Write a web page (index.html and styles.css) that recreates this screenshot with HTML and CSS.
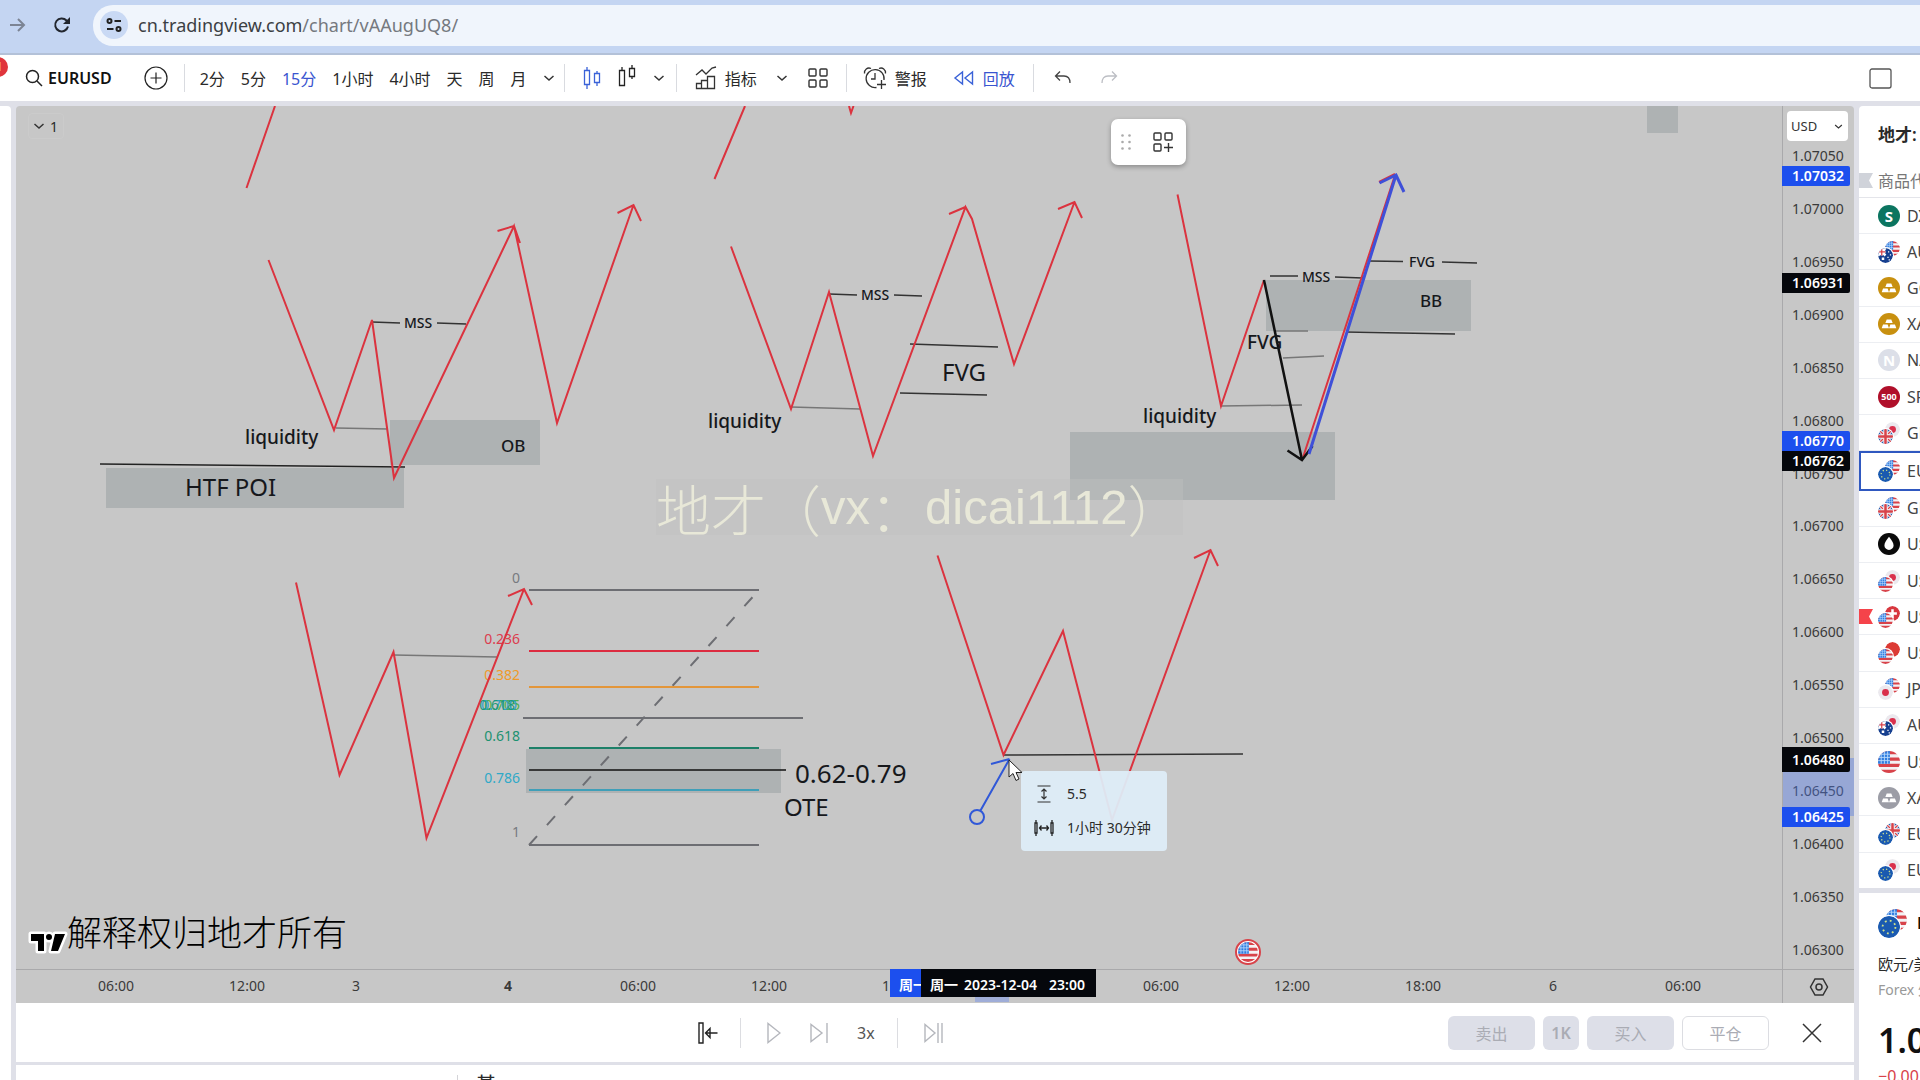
FILE: index.html
```html
<!DOCTYPE html>
<html lang="zh-CN">
<head>
<meta charset="utf-8">
<title>EURUSD</title>
<link rel="stylesheet" href="styles.css">
</head>
<body>
<svg class="defs" aria-hidden="true">
  <defs>
    <clipPath id="disc"><circle cx="12" cy="12" r="12"/></clipPath>
    <symbol id="us" viewBox="0 0 24 24"><g clip-path="url(#disc)"><path fill="#f4f2f4" d="M0 0h24v24H0z"/><path fill="#d8434a" d="M0 0h24v3.5H0zM0 7h24v3.5H0zM0 14h24v3.5H0zM0 20.500h24V24H0z"/><path fill="#2f7de0" d="M0 0h13v14H0z"/><path stroke="#b9d9fb" stroke-width="1" d="M3.500 0v14M7 0v14M10.500 0v14M0 3.500h13M0 7h13M0 10.500h13"/></g></symbol>
    <symbol id="eu" viewBox="0 0 24 24"><circle cx="12" cy="12" r="12" fill="#1a5ab0"/><circle cx="12" cy="12" r="7" fill="none" stroke="#cfe08a" stroke-width="2" stroke-dasharray="2 3.500"/></symbol>
    <symbol id="gb" viewBox="0 0 24 24"><g clip-path="url(#disc)"><path fill="#2d5fae" d="M0 0h24v24H0z"/><path stroke="#f6f2f4" stroke-width="5" d="M0 0l24 24M24 0L0 24M12 0v24M0 12h24"/><path stroke="#d8434a" stroke-width="2" d="M0 0l24 24M24 0L0 24"/><path stroke="#f6f2f4" stroke-width="7" d="M12 0v24M0 12h24"/><path stroke="#d8434a" stroke-width="4" d="M12 0v24M0 12h24"/></g></symbol>
    <symbol id="jp" viewBox="0 0 24 24"><circle cx="12" cy="12" r="12" fill="#ebe9ee"/><circle cx="12" cy="12" r="5.500" fill="#d9304c"/></symbol>
    <symbol id="ch" viewBox="0 0 24 24"><circle cx="12" cy="12" r="12" fill="#d8383f"/><path fill="#fff" d="M10 5h4v5h5v4h-5v5h-4v-5H5v-4h5z"/></symbol>
    <symbol id="cn" viewBox="0 0 24 24"><circle cx="12" cy="12" r="12" fill="#dc3a34"/></symbol>
    <symbol id="au" viewBox="0 0 24 24"><g clip-path="url(#disc)"><path fill="#163f8f" d="M0 0h24v24H0z"/><path stroke="#fff" stroke-width="4" d="M0 0l12 12M12 0L0 12M6 0v12M0 6h12"/><path stroke="#d8434a" stroke-width="2" d="M6 0v12M0 6h12"/><path fill="#fff" d="M16 5h2v2h-2zM19 10h2v2h-2zM15 14h2v2h-2zM17 18h2v2h-2zM6 15h4v4H6z"/></g></symbol>
    <symbol id="bars" viewBox="0 0 24 24"><path fill="#fff" d="M9.500 7h5l1.500 4H8zM5.500 12.500h5L12 16.500H4zM13.500 12.500h5l1.500 4h-8z"/></symbol>
    <symbol id="chev" viewBox="0 0 12 12"><path fill="none" stroke="#333" stroke-width="1.500" d="M1.500 4L6 8l4.500-4"/></symbol>
  </defs>
</svg>

<header class="browser">
  <button class="plain" aria-label="前进"><svg width="18" height="18" viewBox="0 0 18 18" fill="none" stroke="#7c8494" stroke-width="2"><path d="M1 9h14M9 3l6 6-6 6"/></svg></button>
  <button class="plain" aria-label="刷新"><svg width="18" height="18" viewBox="0 0 18 18" fill="none" stroke="#22262e" stroke-width="2"><path d="M15 10.500A6.500 6.500 0 1 1 13.500 4.500L15.500 6.500"/><path fill="#22262e" stroke="none" d="M17 1v7h-7z"/></svg></button>
  <div class="address">
    <span class="site"><svg width="16" height="16" viewBox="0 0 16 16" fill="none" stroke="#222" stroke-width="2"><circle cx="3.500" cy="4" r="2"/><path d="M8.500 4H15M1 12h6.500"/><circle cx="12.500" cy="12" r="2"/></svg></span>
    <a class="url" href="#">cn.tradingview.com<span>/chart/vAAugUQ8/</span></a>
  </div>
</header>

<nav class="toolbar">
  <span class="badge">1</span>
  <div class="group first">
    <button class="plain symbol"><svg width="18" height="18" viewBox="0 0 18 18" fill="none" stroke="#222" stroke-width="1.500"><circle cx="7.500" cy="7.500" r="6"/><path d="M12 12l5 5"/></svg><b>EURUSD</b></button>
    <button class="plain" aria-label="添加"><svg width="24" height="24" viewBox="0 0 24 24" fill="none" stroke="#222" stroke-width="1.200"><circle cx="12" cy="12" r="11"/><path d="M12 6.500v11M6.500 12h11"/></svg></button>
  </div>
  <div class="group intervals">
    <button class="plain">2分</button><button class="plain">5分</button><button class="plain active">15分</button><button class="plain">1小时</button><button class="plain">4小时</button><button class="plain">天</button><button class="plain">周</button><button class="plain">月</button>
    <button class="plain" aria-label="更多"><svg width="12" height="12"><use href="#chev"/></svg></button>
  </div>
  <div class="group types">
    <button class="plain" aria-label="K线"><svg width="18" height="26" viewBox="0 0 18 26" fill="none" stroke="#3a62d8" stroke-width="1.300"><path d="M1.500 5.500h5v14h-5zM4 2v3.500M4 19.500V24M11.500 8.500h5v9h-5zM14 6v2.500M14 17.500V21"/></svg></button>
    <button class="plain" aria-label="空心"><svg width="20" height="26" viewBox="0 0 20 26" fill="none" stroke="#222" stroke-width="1.300"><path d="M2.500 5.500h5v15h-5zM5 2v3.500M12.500 3.500h5v8h-5zM15 0v3.500M15 11.500V14"/></svg></button>
    <button class="plain" aria-label="更多"><svg width="12" height="12"><use href="#chev"/></svg></button>
  </div>
  <div class="group tools">
    <button class="plain labelled"><svg width="22" height="24" viewBox="0 0 22 24" fill="none" stroke="#333" stroke-width="1.300"><path d="M1 9l6-5 4 4 6-6 4-1M1.500 17.500h5v5h-5zM6.500 14.500h6v8h-6zM12.500 10.500h7v12h-7z"/></svg>指标</button>
    <button class="plain" aria-label="收藏"><svg width="12" height="12"><use href="#chev"/></svg></button>
    <button class="plain" aria-label="模板"><svg width="22" height="22" viewBox="0 0 22 22" fill="none" stroke="#333" stroke-width="1.400"><rect x="2" y="2" width="7" height="7" rx="1"/><rect x="13" y="2" width="7" height="7" rx="1"/><rect x="2" y="13" width="7" height="7" rx="1"/><rect x="13" y="13" width="7" height="7" rx="1"/></svg></button>
  </div>
  <div class="group alerts">
    <button class="plain labelled"><svg width="24" height="24" viewBox="0 0 24 24" fill="none" stroke="#333" stroke-width="1.300"><path d="M13.500 21.500A9 9 0 1 1 21 14M12 7v6H8M18.500 14v9M14 18.500h9M1.500 7.500C1 3.500 4.500 1 8 2.500M22.500 7.500C23 3.500 19.500 1 16 2.500"/></svg>警报</button>
    <button class="plain labelled active"><svg width="22" height="16" viewBox="0 0 22 16" fill="none" stroke="#3a62d8" stroke-width="1.400"><path d="M9.500 2v12L2 8zM19.500 2v12L12 8z"/></svg>回放</button>
  </div>
  <div class="group history">
    <button class="plain" aria-label="撤销"><svg width="17" height="16" viewBox="0 0 17 16" fill="none" stroke="#444" stroke-width="1.300"><path d="M6 1.500L1.500 6 6 10.500M1.500 6H10c4 0 6 3 6 7"/></svg></button>
    <button class="plain" aria-label="重做"><svg width="17" height="16" viewBox="0 0 17 16" fill="none" stroke="#bcbec4" stroke-width="1.300"><path d="M11 1.500L15.500 6 11 10.500M15.500 6H7c-4 0-6 3-6 7"/></svg></button>
  </div>
  <button class="plain layout" aria-label="布局"><svg width="23" height="21" viewBox="0 0 23 21" fill="none" stroke="#555" stroke-width="1.300"><rect x="1" y="1" width="21" height="19" rx="2"/></svg></button>
</nav>

<main class="main">
  <aside class="drawbar"></aside>
  <div class="center">
    <section class="chart">
      <div class="plot">
        <svg class="canvas" viewBox="16 106 1766 863" fill="none">
          <g fill="#aeb2b3">
            <rect x="390" y="420" width="150" height="45"/><rect x="106" y="468" width="298" height="40"/>
            <rect x="1647" y="106" width="31" height="27"/><rect x="1266" y="280" width="205" height="51"/>
            <rect x="1070" y="432" width="265" height="68"/><rect x="526" y="749" width="255" height="44"/>
          </g>
          <g stroke="#333" stroke-width="1.500">
            <path stroke="#222" d="M100 464l305 3"/>
            <path d="M372 322l28 1M437 323l29 1M829 294l28 1M894 295l28 1M910 344l88 3M900 393l87 2M1369 261l34 .500M1442 262l35 1M1270 276h28M1335 277l28 1M1346 332l109 2M1004 755l239-1"/>
          </g>
          <g stroke="#777" stroke-width="1.500"><path d="M336 428l52 1M791 407l69 2M1276 331h32M1283 358l41-2M1221 406l81-1M394 655l103 2"/></g>
          <g stroke="#6d6e73" stroke-width="2"><path d="M529 590h230M523 718h280M529 845h230"/><path stroke-dasharray="12 14.800" d="M529 845L759 590"/></g>
          <g stroke-width="2"><path stroke="#dc2c40" d="M529 651h230"/><path stroke="#e3963a" d="M529 687h230"/><path stroke="#1c8068" d="M529 748h230"/><path stroke="#3f9fb8" d="M529 790h230"/></g>
          <path stroke="#111" stroke-width="1.300" d="M529 770h257"/>
          <g class="fib"><text x="520" y="583" fill="#777a80">0</text><text x="520" y="644" fill="#dc3c4e">0.236</text><text x="520" y="680" fill="#f09a2a">0.382</text><text x="520" y="710" fill="#52b04c">0.705</text><text x="517" y="710" fill="#2f9fc4">0.700</text><text x="515" y="710" fill="#1c9a78">0.618</text><text x="520" y="741" fill="#1c9270">0.618</text><text x="520" y="783" fill="#2fa9c8">0.786</text><text x="520" y="837" fill="#777a80">1</text></g>
          <g stroke="#db333f" stroke-width="2">
            <path d="M246.500 188L275 106M714.500 179L745 106M849 106l2 7 2.500-7"/>
            <path d="M268.500 260L334 430 372 320 394 478 514 226 557 423 633.500 205M497.500 231l16.500-5 6 17M617.500 213l16-8 7.500 16"/>
            <path d="M731 246.500L791 409 829 292 873 456 965.500 207l6.500 12 42 145L1074.500 202M949 214l16.500-7M1058 209l16.500-7 7.500 16"/>
            <path d="M1177.500 194.500L1221 406l43-126M1302.500 459L1395 175M1379 182l16-8"/>
            <path d="M296 582.500L339.500 775 393.500 652 426.500 838 524 589M508 596l16-7 8 16"/>
            <path d="M937.500 555.500L1003.500 755 1063 631l49 189 98.500-270M1194 558l16.500-8 7.500 16"/>
          </g>
          <path stroke="#111" stroke-width="2.500" d="M1264 280l38 180M1287.500 450.500L1302 460l10.500-14"/>
          <path stroke="#3f50d8" stroke-width="3" d="M1309 454l87-279M1379.500 183l16.500-8 8 17"/>
          <g stroke="#3058d8" stroke-width="2"><path d="M980.500 810.500L1009.500 759M991 764l18.500-5"/><circle cx="977" cy="817" r="7"/></g>
          <g class="note"><text x="404" y="328">MSS</text><text x="861" y="300">MSS</text><text x="1302" y="282">MSS</text><text x="1409" y="267">FVG</text></g>
          <g class="word"><text x="245" y="444">liquidity</text><text x="708" y="428">liquidity</text><text x="1143" y="423">liquidity</text><text x="1247" y="349">FVG</text></g>
          <g class="tag"><text x="501" y="452">OB</text><text x="1420" y="307">BB</text></g>
          <g class="title"><text x="185" y="496">HTF POI</text><text x="942" y="381">FVG</text><text class="ratio" x="795" y="783">0.62-0.79</text><text x="784" y="816">OTE</text></g>
          <circle cx="1248" cy="952" r="12" fill="#fff" stroke="#d8434a" stroke-width="2"/><use href="#us" x="1238" y="942" width="20" height="20"/>
          <path fill="#000" stroke="#fff" stroke-width="5" stroke-linejoin="round" paint-order="stroke" d="M31 934h13v17h-6v-10h-7zM46 937a3 3 0 1 0 6 0a3 3 0 1 0-6 0M55 934h10l-7 17h-7z"/>
        </svg>
        <button class="legend plain"><svg width="12" height="12"><use href="#chev"/></svg>1</button>
        <div class="floating">
          <svg width="10" height="16" viewBox="0 0 10 16" fill="#aaa"><circle cx="1.500" cy="1.500" r="1.300"/><circle cx="8.500" cy="1.500" r="1.300"/><circle cx="1.500" cy="8" r="1.300"/><circle cx="8.500" cy="8" r="1.300"/><circle cx="1.500" cy="14.500" r="1.300"/><circle cx="8.500" cy="14.500" r="1.300"/></svg>
          <button class="plain" aria-label="添加模板"><svg width="20" height="20" viewBox="0 0 20 20" fill="none" stroke="#333" stroke-width="1.400"><rect x="1" y="1" width="7" height="7" rx="1"/><rect x="12" y="1" width="7" height="7" rx="1"/><rect x="1" y="12" width="7" height="7" rx="1"/><path d="M11 15.500h9M15.500 11v9"/></svg></button>
        </div>
        <p class="watermark">地才（<span>vx</span>：<span>dicai1112</span>）</p>
        <p class="rights">解释权归地才所有</p>
        <div class="measure">
          <svg width="20" height="18" viewBox="0 0 20 18" fill="none" stroke="#333" stroke-width="1.200"><path d="M3.500 1h13M3.500 17h13M10 4v10M7.500 6.500L10 4l2.500 2.500M7.500 11.500L10 14l2.500-2.500"/></svg><span>5.5</span>
          <svg width="20" height="16" viewBox="0 0 20 16" fill="none" stroke="#222" stroke-width="1.300"><path d="M1 3h2v10H1zM17 3h2v10h-2zM2 0v3M2 13v3M18 0v3M18 13v3M5.500 8h9M7.500 5.500L5.500 8l2 2.500M12.500 5.500l2 2.500-2 2.500"/></svg><span>1小时 30分钟</span>
        </div>
        <svg class="cursor" width="16" height="24" viewBox="0 0 16 24"><path fill="#fff" stroke="#222" d="M1 1v17l4-3.500 3 7 3-1.500-3-6.500h6z"/></svg>
      </div>
      <div class="prices">
        <label class="currency"><select aria-label="货币"><option>USD</option></select><svg width="9" height="9"><use href="#chev"/></svg></label>
        <ul class="ticks"><li>1.07050</li><li>1.07000</li><li>1.06950</li><li>1.06900</li><li>1.06850</li><li>1.06800</li><li>1.06750</li><li>1.06700</li><li>1.06650</li><li>1.06600</li><li>1.06550</li><li>1.06500</li><li>1.06450</li><li>1.06400</li><li>1.06350</li><li>1.06300</li></ul>
        <span class="range"></span>
        <b class="price blue" style="top:60px">1.07032</b><b class="price" style="top:167px">1.06931</b><b class="price blue" style="top:325px">1.06770</b><b class="price" style="top:345px">1.06762</b><b class="price tall" style="top:641px">1.06480</b><b class="price blue" style="top:701px">1.06425</b>
      </div>
      <div class="times">
        <span>06:00</span><span>12:00</span><span>3</span><span><b>4</b></span><span>06:00</span><span>12:00</span><span>18:00</span><span>06:00</span><span>12:00</span><span>18:00</span><span>6</span><span>06:00</span>
        <i class="span"></i>
        <div class="stamps"><b class="start">周一</b><b class="end"><span>周一</span><span>2023-12-04</span><span>23:00</span></b></div>
      </div>
      <button class="plain gear" aria-label="设置"><svg width="20" height="18" viewBox="0 0 20 18" fill="none" stroke="#333" stroke-width="1.500"><path d="M6 1h8l4.500 8-4.500 8H6L1.500 9z"/><circle cx="10" cy="9" r="3"/></svg></button>
    </section>
    <section class="replay">
      <div class="controls">
        <button class="plain" aria-label="跳至"><svg width="20" height="22" viewBox="0 0 20 22" fill="none" stroke="#222" stroke-width="1.400"><path d="M1 1h4v20H1zM19.500 11H8M12 6.500L7.500 11l4.500 4.500z"/></svg></button>
        <i class="bar"></i>
        <button class="plain" aria-label="播放"><svg width="14" height="22" viewBox="0 0 14 22" fill="none" stroke="#b5b7bd" stroke-width="1.400"><path d="M1 1.500v19L13 11z"/></svg></button>
        <button class="plain" aria-label="下一步"><svg width="18" height="22" viewBox="0 0 18 22" fill="none" stroke="#b5b7bd" stroke-width="1.400"><path d="M1 2.500v17L12 11zM17 1v20"/></svg></button>
        <button class="plain speed">3x</button>
        <i class="bar"></i>
        <button class="plain" aria-label="实时"><svg width="19" height="22" viewBox="0 0 19 22" fill="none" stroke="#b5b7bd" stroke-width="1.400"><path d="M1 2.500v17L11 11zM14 1v20M18 1v20"/></svg></button>
      </div>
      <div class="orders">
        <button class="order">卖出</button><button class="order qty">1K</button><button class="order">买入</button><button class="order flat">平仓</button>
      </div>
      <button class="plain close" aria-label="关闭"><svg width="20" height="20" viewBox="0 0 20 20" stroke="#333" stroke-width="1.500"><path d="M1 1l18 18M19 1L1 19"/></svg></button>
    </section>
    <section class="tabs"><button class="plain">基</button></section>
  </div>
  <aside class="side">
    <section class="watch">
      <h2>地才:</h2>
      <p class="head"><svg class="mark" width="14" height="15"><path fill="#d0d3da" d="M0 0h14l-4 7.500 4 7.500H0z"/></svg>商品代码</p>
      <ul class="list">
        <li><i class="coin green">S</i>DXY</li>
        <li><i class="pair"><svg><use href="#us"/></svg><svg><use href="#au"/></svg></i>AUDUSD</li>
        <li><i class="coin gold"><svg><use href="#bars"/></svg></i>GOLD</li>
        <li><i class="coin gold"><svg><use href="#bars"/></svg></i>XAUUSD</li>
        <li><i class="coin pale">N</i>NAS100</li>
        <li><i class="coin red">500</i>SPX</li>
        <li><i class="pair"><svg><use href="#jp"/></svg><svg><use href="#gb"/></svg></i>GBPJPY</li>
        <li class="current"><i class="pair"><svg><use href="#us"/></svg><svg><use href="#eu"/></svg></i>EURUSD</li>
        <li><i class="pair"><svg><use href="#us"/></svg><svg><use href="#gb"/></svg></i>GBPUSD</li>
        <li><i class="coin black"><svg viewBox="0 0 24 24"><path fill="#fff" d="M12 4c3 4 5 6.500 5 9.500a5 5 0 0 1-10 0C7 10.500 9 8 12 4z"/></svg></i>USOIL</li>
        <li><i class="pair"><svg><use href="#jp"/></svg><svg><use href="#us"/></svg></i>USDJPY</li>
        <li><svg class="mark" width="14" height="15"><path fill="#f5434a" d="M0 0h14l-4 7.500 4 7.500H0z"/></svg><i class="pair"><svg><use href="#ch"/></svg><svg><use href="#us"/></svg></i>USDCHF</li>
        <li><i class="pair"><svg><use href="#cn"/></svg><svg><use href="#us"/></svg></i>USDCNH</li>
        <li><i class="pair"><svg><use href="#us"/></svg><svg><use href="#jp"/></svg></i>JPYUSD</li>
        <li><i class="pair"><svg><use href="#jp"/></svg><svg><use href="#au"/></svg></i>AUDJPY</li>
        <li><i class="coin"><svg><use href="#us"/></svg></i>USDX</li>
        <li><i class="coin silver"><svg><use href="#bars"/></svg></i>XAGUSD</li>
        <li><i class="pair"><svg><use href="#gb"/></svg><svg><use href="#eu"/></svg></i>EURGBP</li>
        <li><i class="pair"><svg><use href="#jp"/></svg><svg><use href="#eu"/></svg></i>EURJPY</li>
      </ul>
    </section>
    <section class="detail">
      <h3><i class="pair big"><svg><use href="#us"/></svg><svg><use href="#eu"/></svg></i>EURUSD</h3>
      <p>欧元/美元</p>
      <p class="market">Forex 外汇</p>
      <p class="last">1.06</p>
      <p class="change">−0.00</p>
    </section>
  </aside>
</main>
</body>
</html>
```
FILE: styles.css
```css
* { box-sizing: border-box; }
body { margin: 0; height: 100vh; overflow: hidden; display: flex; flex-direction: column; background: #fff; color: #2a2a2a; font-family: "Noto Sans", "Noto Sans CJK SC", sans-serif; font-size: 16px; }
p, h2, h3, ul { margin: 0; padding: 0; list-style: none; }
i { font-style: normal; }
svg { display: block; flex: none; }
.defs { position: absolute; width: 0; height: 0; }
.plain { border: 0; padding: 0; background: none; color: inherit; font: inherit; display: flex; align-items: center; }

.browser { flex: 0 0 55px; display: flex; align-items: center; gap: 26px; padding: 0 0 3px 9px; background: #c4d5f2; border-bottom: 2px solid #b3c1d8; }
.browser .address { margin-left: -4px; }
.address { flex: 1; height: 41px; display: flex; align-items: center; gap: 10px; padding-left: 7px; border-radius: 20px 0 0 20px; background: #f0f5fc; }
.site { width: 28px; height: 28px; display: grid; place-items: center; border-radius: 50%; background: #c9d9f4; }
.url { color: #3c3f44; font-size: 18px; text-decoration: none; }
.url span { color: #75797f; }

.toolbar { position: relative; flex: 0 0 46px; display: flex; align-items: center; background: #fff; }
.badge { position: absolute; left: -12px; top: 2px; width: 20px; height: 20px; border-radius: 50%; background: #e0353c; color: #fff; font-size: 12px; line-height: 20px; text-align: right; padding-right: 6px; font-weight: 700; }
.group { display: flex; align-items: center; height: 28px; border-right: 1px solid #d9dbe0; gap: 16px; }
.first { padding: 0 16px 0 25px; gap: 32px; }
.symbol { gap: 5px; }
.symbol b { font-size: 16px; font-weight: 600; color: #111; }
.intervals { padding: 0 9px 0 15px; }
.types { padding: 0 11px 0 18px; }
.tools { padding: 0 17px 0 18px; gap: 19px; }
.alerts { padding: 0 18px 0 16px; gap: 26px; }
.history { padding-left: 20px; gap: 30px; border: 0; }
.labelled { gap: 8px; }
.active { color: #3a55d0; }
.layout { margin-left: auto; padding-right: 28px; }

.main { flex: 1; min-height: 0; display: flex; gap: 5px; padding-top: 5px; background: #dfe0e8; }
.drawbar { flex: 0 0 11px; background: #fff; border-top-right-radius: 4px; }
.center { flex: 1; min-width: 0; display: flex; flex-direction: column; }
.chart { flex: 1; min-height: 0; display: grid; grid-template: 1fr 34px / 1fr 72px; background: #c7c7c7; border-radius: 4px 4px 0 0; overflow: hidden; }
.plot { position: relative; min-height: 0; }
.canvas { width: 100%; height: 100%; }
.canvas text { fill: #16181c; }
.canvas .fib text { font-size: 14px; text-anchor: end; }
.canvas .fib text[fill="#777a80"] { fill: #777a80; }
.canvas .fib text[fill="#dc3c4e"] { fill: #dc3c4e; }
.canvas .fib text[fill="#f09a2a"] { fill: #f09a2a; }
.canvas .fib text[fill="#52b04c"] { fill: #52b04c; }
.canvas .fib text[fill="#2f9fc4"] { fill: #2f9fc4; }
.canvas .fib text[fill="#1c9a78"] { fill: #1c9a78; }
.canvas .fib text[fill="#1c9270"] { fill: #1c9270; }
.canvas .fib text[fill="#2fa9c8"] { fill: #2fa9c8; }
.note { font-size: 14px; font-weight: 500; }
.word { font-size: 19px; font-weight: 500; }
.tag { font-size: 17px; font-weight: 500; }
.title { font-size: 24px; }
.ratio { font-size: 26px; }
.legend { position: absolute; left: 12px; top: 7px; width: 36px; height: 26px; gap: 5px; padding-left: 4px; border: 1px solid #cbcbcb; border-radius: 4px; font-size: 14px; }
.floating { position: absolute; left: 1095px; top: 13px; width: 75px; height: 46px; display: flex; align-items: center; gap: 22px; padding-left: 10px; border-radius: 7px; background: #fff; box-shadow: 0 2px 5px rgba(0,0,0,.3); }
.watermark { position: absolute; left: 640px; top: 373px; height: 56px; display: flex; align-items: center; background: rgba(192,192,192,.4); color: #e8e8d8; font: 300 55px/56px "Noto Sans CJK SC", sans-serif; white-space: nowrap; }
.watermark span { font: 49px/56px "Liberation Sans", sans-serif; }
.rights { position: absolute; left: 51px; top: 804px; color: #000; font: 300 35px/42px "Noto Sans CJK SC", sans-serif; }
.measure { position: absolute; left: 1005px; top: 665px; width: 146px; height: 80px; display: grid; grid-template-columns: 20px 1fr; align-content: center; align-items: center; gap: 12px 13px; padding-left: 13px; border-radius: 4px; background: rgba(222,237,248,.94); font-size: 14px; line-height: 22px; white-space: nowrap; }
.cursor { position: absolute; left: 992px; top: 653px; }

.prices { position: relative; display: flex; flex-direction: column; border-left: 1px solid #a9a9ab; font-size: 14px; }
.currency { position: relative; z-index: 1; width: 61px; height: 30px; margin: 5px 0 0 4px; display: flex; align-items: center; border-radius: 4px; background: #fff; }
.currency select { appearance: none; width: 100%; height: 100%; border: 0; padding: 0 0 0 4px; background: none; color: #333; font: inherit; font-size: 13px; }
.currency svg { position: absolute; right: 5px; }
.ticks { flex: 1; display: flex; flex-direction: column; justify-content: space-between; padding: 5px 0 9px 9px; line-height: 20px; color: #3a3a3a; }
.price { position: absolute; left: -1px; width: 68px; height: 20px; padding-left: 10px; border-radius: 0 2px 2px 0; background: #05070c; color: #fff; line-height: 20px; font-weight: 600; }
.blue { background: #1c4fee; }
.tall { height: 25px; line-height: 25px; }
.range { position: absolute; left: 0; right: 0; top: 652px; height: 58px; background: rgba(80,120,235,.4); }
.times { position: relative; display: grid; grid-template-columns: 100fr 131fr 109fr 152fr 130fr 131fr 131fr 261fr 131fr 131fr 130fr 130fr 99fr; border-top: 1px solid #a9a9ab; font-size: 14px; line-height: 32px; color: #3a3a3a; }
.times > span { width: 0; display: flex; justify-content: center; }
.times > span:first-child { grid-column: 2; }
.stamps { position: absolute; left: 874px; top: -1px; display: flex; height: 28px; line-height: 32px; color: #fff; white-space: nowrap; font-size: 14px; }
.start { width: 31px; overflow: hidden; padding-left: 9px; background: #1c4fee; font-weight: 600; }
.end { width: 175px; display: flex; padding-left: 9px; background: #05070c; font-weight: 600; }
.end span + span { margin-left: 6px; }
.end span:last-child { margin-left: 12px; }
.span { position: absolute; left: 959px; bottom: 1px; width: 34px; height: 5px; background: #9fadd8; }
.gear { justify-content: center; border-left: 1px solid #a9a9ab; border-top: 1px solid #a9a9ab; }

.replay { flex: 0 0 59px; display: flex; align-items: center; background: #fff; padding-right: 32px; }
.controls { flex: 1; display: flex; align-items: center; padding-left: 682px; }
.bar { width: 1px; height: 30px; background: #dcdde1; margin: 0 26px 0 22px; }
.controls button + button { margin-left: 29px; }
.speed { color: #555; font-size: 16px; }
.orders { display: flex; gap: 8px; }
.order { width: 87px; height: 34px; border: 0; border-radius: 6px; background: #dddfe8; color: #aaacb4; font: inherit; }
.qty { width: 36px; padding: 0; font-weight: 600; }
.flat { background: #fff; border: 1px solid #dcdde2; }
.close { margin-left: 33px; }
.tabs { flex: 0 0 15px; margin-top: 3px; background: #fff; overflow: hidden; padding: 10px 0 0 441px; }
.tabs button { height: 30px; border-left: 1px solid #d4d4d8; padding-left: 18px; font-size: 20px; line-height: 20px; align-items: flex-start; }

.side { flex: 0 0 61px; min-width: 0; display: flex; flex-direction: column; gap: 5px; overflow: hidden; white-space: nowrap; }
.watch { flex: 1; display: flex; flex-direction: column; background: #fff; border-top-left-radius: 4px; }
.watch h2 { height: 58px; padding-left: 19px; font-size: 17px; font-weight: 600; line-height: 58px; }
.head { position: relative; height: 34px; padding-left: 19px; color: #777; line-height: 34px; border-bottom: 1px solid #e4e5ea; }
.mark { position: absolute; left: 0; top: 50%; margin-top: -8px; }
.list { flex: 1; display: flex; flex-direction: column; }
.list li { position: relative; flex: 1; display: flex; align-items: center; gap: 7px; padding-left: 19px; border-bottom: 1px solid #eceef2; color: #444; }
.list .current { border: 2px solid #2f58c0; border-right: 0; padding-left: 17px; }
.list li:last-child { border-bottom: 0; }
.coin { flex: none; width: 22px; height: 22px; display: grid; place-items: center; border-radius: 50%; color: #fff; font-size: 15px; line-height: 22px; font-weight: 700; }
.coin svg { width: 22px; height: 22px; }
.green { background: #0b7560; }
.gold { background: #c8900f; }
.pale { background: #dcdfe8; }
.red { background: #b00f2a; font-size: 9px; }
.black { background: #0a0a0a; }
.silver { background: #9c9da6; }
.pair { flex: none; width: 22px; height: 22px; display: grid; }
.pair svg { grid-area: 1 / 1; width: 15px; height: 15px; justify-self: end; border-radius: 50%; }
.pair svg + svg { place-self: end start; box-shadow: 0 0 0 1px #fff; background: #fff; }
.big { width: 29px; height: 29px; }
.big svg { width: 22px; height: 22px; }
.detail { flex: 0 0 187px; padding: 14px 0 0 19px; background: #fff; overflow: hidden; }
.detail h3 { display: flex; align-items: center; gap: 10px; height: 32px; font-size: 16px; color: #111; }
.detail p { margin-top: 13px; font-size: 15px; line-height: 24px; }
.detail .market { margin-top: 2px; color: #999; font-size: 14px; }
.detail .last { margin-top: 20px; color: #111; font-size: 34px; font-weight: 600; line-height: 36px; }
.detail .change { margin-top: 6px; color: #d8434a; font-size: 16px; }
```
